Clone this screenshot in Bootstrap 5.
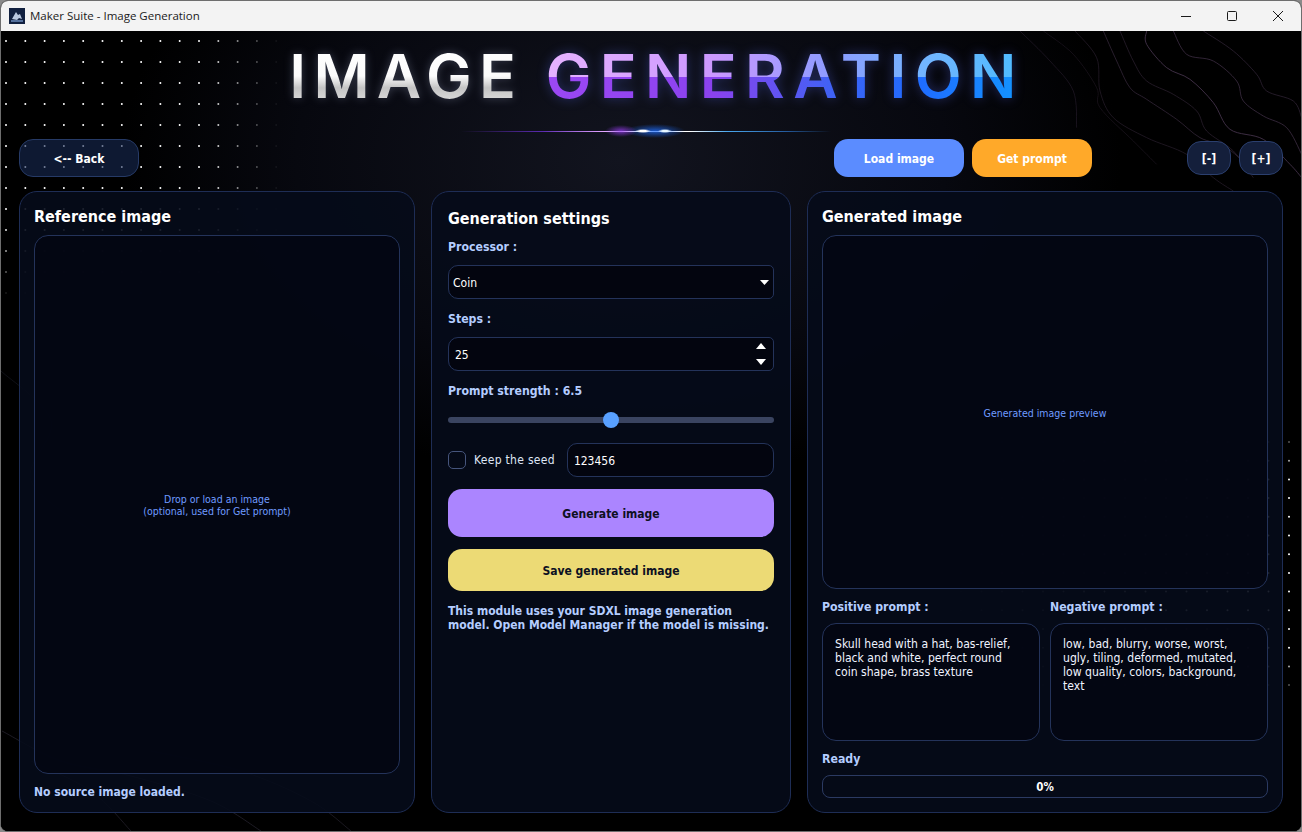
<!DOCTYPE html>
<html lang="en">
  <head>
    <meta charset="UTF-8" />
    <title>Maker Suite - Image Generation</title>
    <link href="https://cdn.jsdelivr.net/npm/bootstrap@5.3.0/dist/css/bootstrap.min.css" rel="stylesheet" />
    <style>
      html, body {
        height: 100%;
        margin: 0;
        background: #8a8a8a;
        overflow: hidden;
      }
      body {
        font-family: "DejaVu Sans", sans-serif;
        font-stretch: condensed;
        font-size: 12px;
      }
      .btn, .form-control, .form-select {
        font-family: "DejaVu Sans", sans-serif;
        font-stretch: condensed;
      }
      .app-window {
        width: 1302px;
        height: 832px;
        border: 1px solid #6e6e6e;
        border-radius: 8px;
        overflow: hidden;
        background: #000;
      }
      .win-titlebar {
        height: 30px;
        background: #f3f3f3;
        padding-left: 8px;
        font-family: "Open Sans", sans-serif;
        font-stretch: normal;
        font-size: 11.5px;
        color: #1a1a1a;
      }
      .win-name { margin-left: 5px; }
      .win-btn {
        width: 46px;
        height: 30px;
      }
      .app-body {
        height: 800px;
        background: radial-gradient(ellipse 500px 320px at 620px 130px, #12141f 0%, #07080f 65%, #000 100%), #000;
      }
      .bg-art {
        position: absolute;
        inset: 0;
        width: 100%;
        height: 100%;
      }
      .app-content {
        position: relative;
        height: 100%;
        padding: 0 18px 18px 18px;
      }
      .app-title {
        height: 108px;
        margin: 0;
        padding: 14px 0 0 12px;
        text-align: center;
        white-space: nowrap;
        font-family: Inter, "Liberation Sans", sans-serif;
        font-stretch: normal;
        font-size: 61px;
        line-height: 62px;
        font-weight: 600;
        letter-spacing: 7.2px;
        color: transparent;
      }
      .title-silver {
        background: linear-gradient(180deg, #fff 0%, #fbfbfb 50%, #c4c4c4 66%, #eee 100%);
        -webkit-background-clip: text;
        background-clip: text;
        filter: drop-shadow(0 0 5px rgba(200, 210, 255, 0.25));
      }
      .title-color {
        letter-spacing: 8.4px;
        background:
          linear-gradient(90deg, #e6b2ff 0%, #cb98ff 35%, #8c9cff 60%, #74b4ff 78%, #4cbcff 100%) top / 100% 52% no-repeat,
          linear-gradient(90deg, #9c48f4 0%, #8a42ee 35%, #3f62f5 60%, #1f6cff 78%, #1296ff 100%) bottom / 100% 48% no-repeat;
        -webkit-background-clip: text;
        background-clip: text;
        filter: drop-shadow(0 0 6px rgba(90, 110, 255, 0.35));
      }
      .title-flare {
        position: absolute;
        left: 460px;
        top: 100px;
        width: 370px;
        height: 1px;
        background: linear-gradient(90deg, transparent 0%, #5a2ab0 22%, #e0a0ff 38%, #fff 47%, #fff 62%, #4aa8f0 72%, #245a9c 88%, transparent 100%);
      }
      .title-flare::after {
        content: "";
        position: absolute;
        left: 130px;
        top: -7px;
        width: 100px;
        height: 15px;
        background:
          radial-gradient(ellipse 8px 2px at 52px 7px, #fff 40%, transparent 100%),
          radial-gradient(ellipse 7px 2px at 74px 7px, #e6f6ff 40%, transparent 100%),
          radial-gradient(ellipse 16px 6px at 30px 7px, rgba(150, 60, 240, 0.75), transparent 100%),
          radial-gradient(ellipse 30px 7px at 64px 7px, rgba(30, 110, 255, 0.75), transparent 100%);
      }
      .top-row {
        height: 38px;
        margin-bottom: 14px;
      }
      .btn.top-btn {
        height: 38px;
        padding: 1px 0 0 0;
        border-radius: 14px;
        font-size: 12px;
        font-weight: 700;
        color: #fff;
        border: 1px solid transparent;
      }
      .btn.back-btn {
        width: 120px;
        background: rgba(24, 42, 84, 0.6);
        border-color: #263a66;
      }
      .btn.load-btn {
        width: 130px;
        background: #5b8cff;
        margin-right: 8px;
      }
      .btn.prompt-btn {
        width: 120px;
        background: #ffa929;
        margin-right: 87px;
      }
      .btn.zoom-btn {
        width: 44px;
        height: 34px;
        background: #141f3b;
        border-color: #2b3f6e;
        margin-left: 8px;
      }
      .panels {
        height: 622px;
        gap: 16px;
      }
      .glass-panel {
        background: rgba(6, 11, 26, 0.9);
        border: 1px solid #1e2d55;
        border-radius: 18px;
        height: 100%;
      }
      .panel-left { width: 396px; padding: 15px 14px 0 14px; }
      .panel-mid { width: 360px; padding: 17px 16px 0 16px; }
      .panel-right { width: 476px; padding: 15px 14px 0 14px; }
      .panel-heading {
        color: #fff;
        font-size: 16px;
        line-height: 20px;
        font-weight: 700;
        margin: 0 0 8px 0;
      }
      .panel-mid .panel-heading { margin-bottom: 10px; }
      .drop-box {
        background: rgba(3, 6, 18, 0.88);
        border: 1px solid #24335a;
        border-radius: 14px;
        color: #6f9bff;
        font-size: 10.5px;
        line-height: 12px;
        text-align: center;
      }
      .drop-src { height: 539px; }
      .drop-gen { height: 354px; padding-top: 2px; }
      .field-label {
        color: #b4cdff;
        font-size: 12.2px;
        line-height: 16px;
        font-weight: 700;
      }
      .field-label.status-text {
        margin-top: 10px;
        font-size: 12px;
      }
      .form-control.dark-input, .form-select.dark-input {
        background-color: #03050f;
        border: 1px solid #24335a;
        border-radius: 10px;
        color: #fff;
        font-size: 12px;
        height: 34px;
        min-height: 0;
        padding: 1px 6px 0 6px;
        box-shadow: none;
      }
      .form-select.dark-input {
        padding: 1px 4px 0 4px;
        background-image: url("data:image/svg+xml,%3Csvg xmlns='http://www.w3.org/2000/svg' width='9' height='5'%3E%3Cpath fill='%23fff' d='M0 0h9L4.500 5z'/%3E%3C/svg%3E");
        background-size: 9px 5px;
        background-position: right 4px center;
      }
      .form-select.dark-input, .spin-wrap .form-control.dark-input {
        border-top-right-radius: 5px;
        border-bottom-right-radius: 5px;
      }
      .spin-wrap {
        position: relative;
      }
      .spin-up, .spin-down {
        position: absolute;
        right: 8px;
        width: 10px;
        height: 6px;
      }
      .spin-up { top: 6px; }
      .spin-down { bottom: 6px; }
      .mid-label { margin: 0 0 10px 0; }
      .mid-gap { margin-bottom: 12px; }
      .form-range.strength {
        height: 16px;
        display: block;
        margin: 13px 0 15px 0;
      }
      .form-range.strength::-webkit-slider-runnable-track {
        height: 6px;
        border-radius: 3px;
        background: #3a4460;
      }
      .form-range.strength::-webkit-slider-thumb {
        width: 16px;
        height: 16px;
        margin-top: -5px;
        border-radius: 50%;
        background: #58a0ff;
        box-shadow: none;
      }
      .seed-row {
        height: 34px;
        margin-bottom: 12px;
      }
      .form-check-input.seed-check {
        width: 18px;
        height: 18px;
        margin: 0 8px 0 0;
        background-color: transparent;
        border: 1px solid #46557c;
        border-radius: 5px;
      }
      .seed-label {
        color: #dfe6f5;
        letter-spacing: 0.3px;
        margin-right: 12px;
        white-space: nowrap;
      }
      .btn.action-btn {
        width: 100%;
        padding: 1px 0 0 0;
        border: 1px solid transparent;
        border-radius: 14px;
        font-size: 12px;
        font-weight: 700;
        color: #0d1022;
      }
      .btn.gen-btn { height: 48px; background: #ab85ff; margin-bottom: 12px; }
      .btn.save-btn { height: 42px; background: #ecda75; }
      .note-text {
        color: #b4cdff;
        font-weight: 700;
        font-size: 12px;
        line-height: 14px;
        margin: 13px 0 0 0;
        white-space: nowrap;
      }
      .prompt-col { width: 218px; }
      .prompt-row { gap: 10px; margin-top: 10px; }
      .form-control.prompt-box {
        height: 118px;
        margin-top: 8px;
        padding: 13px 12px 6px 12px;
        background: rgba(3, 6, 18, 0.88);
        border: 1px solid #24335a;
        border-radius: 14px;
        color: #f0f3ff;
        font-size: 12.1px;
        line-height: 14px;
        resize: none;
        overflow: hidden;
        box-shadow: none;
      }
      .ready-label { margin-top: 10px; }
      .progress.job-progress {
        height: 23px;
        margin-top: 8px;
        position: relative;
        background: transparent;
        border: 1px solid #2b3a62;
        border-radius: 8px;
      }
      .progress-text {
        position: absolute;
        inset: 0;
        text-align: center;
        color: #fff;
        font-size: 11.5px;
        line-height: 23px;
        font-weight: 700;
      }
    </style>
  </head>
  <body>
    <div class="app-window d-flex flex-column">
      <div class="win-titlebar d-flex align-items-center flex-shrink-0">
        <svg width="16" height="16" viewBox="0 0 16 16" class="flex-shrink-0">
          <rect width="16" height="16" fill="#11203f" />
          <path d="M3 11 7 4l2 3 2-1 2 5-3-1-2 2z" fill="#b9c8df" />
          <rect x="2" y="12" width="12" height="2" fill="#54709c" />
        </svg>
        <span class="win-name">Maker Suite - Image Generation</span>
        <div class="ms-auto d-flex">
          <div class="win-btn d-flex align-items-center justify-content-center">
            <svg width="10" height="10"><path d="M0 5.500h10" stroke="#1a1a1a" /></svg>
          </div>
          <div class="win-btn d-flex align-items-center justify-content-center">
            <svg width="10" height="10"><rect x=".5" y=".5" width="9" height="9" rx="1" fill="none" stroke="#1a1a1a" /></svg>
          </div>
          <div class="win-btn d-flex align-items-center justify-content-center">
            <svg width="10" height="10"><path d="M0 0l10 10M10 0 0 10" stroke="#1a1a1a" /></svg>
          </div>
        </div>
      </div>
      <div class="app-body position-relative flex-grow-1">
        <svg class="bg-art" id="bgArt" viewBox="0 0 1300 800"></svg>
        <div class="app-content">
          <h1 class="app-title"><span class="title-silver">IMAGE</span> <span class="title-color">GENERATION</span></h1>
          <div class="title-flare"></div>
          <div class="top-row d-flex align-items-center">
            <button class="btn top-btn back-btn">&lt;-- Back</button>
            <div class="ms-auto d-flex align-items-center">
              <button class="btn top-btn load-btn">Load image</button>
              <button class="btn top-btn prompt-btn">Get prompt</button>
              <button class="btn top-btn zoom-btn">[-]</button>
              <button class="btn top-btn zoom-btn">[+]</button>
            </div>
          </div>
          <div class="panels d-flex">
            <div class="glass-panel panel-left">
              <h2 class="panel-heading">Reference image</h2>
              <div class="drop-box drop-src d-flex align-items-center justify-content-center">
                <div>Drop or load an image<br />(optional, used for Get prompt)</div>
              </div>
              <div class="field-label status-text">No source image loaded.</div>
            </div>
            <div class="glass-panel panel-mid">
              <h2 class="panel-heading">Generation settings</h2>
              <div class="field-label mid-label">Processor :</div>
              <select class="form-select dark-input mid-gap"><option>Coin</option></select>
              <div class="field-label mid-label">Steps :</div>
              <div class="spin-wrap mid-gap">
                <input class="form-control dark-input" value="25" />
                <svg class="spin-up" viewBox="0 0 10 6"><path d="M0 6h10L5 0z" fill="#fff" /></svg>
                <svg class="spin-down" viewBox="0 0 10 6"><path d="M0 0h10L5 6z" fill="#fff" /></svg>
              </div>
              <div class="field-label">Prompt strength : 6.5</div>
              <input type="range" class="form-range strength" min="1" max="12" step="0.5" value="6.5" />
              <div class="seed-row d-flex align-items-center">
                <input type="checkbox" class="form-check-input seed-check" />
                <span class="seed-label">Keep the seed</span>
                <input class="form-control dark-input flex-grow-1 w-auto" value="123456" />
              </div>
              <button class="btn action-btn gen-btn">Generate image</button>
              <button class="btn action-btn save-btn">Save generated image</button>
              <p class="note-text">This module uses your SDXL image generation<br />model. Open Model Manager if the model is missing.</p>
            </div>
            <div class="glass-panel panel-right">
              <h2 class="panel-heading">Generated image</h2>
              <div class="drop-box drop-gen d-flex align-items-center justify-content-center">Generated image preview</div>
              <div class="d-flex prompt-row">
                <div class="prompt-col">
                  <div class="field-label">Positive prompt :</div>
                  <textarea class="form-control prompt-box">Skull head with a hat, bas-relief, black and white, perfect round coin shape, brass texture</textarea>
                </div>
                <div class="prompt-col">
                  <div class="field-label">Negative prompt :</div>
                  <textarea class="form-control prompt-box">low, bad, blurry, worse, worst, ugly, tiling, deformed, mutated, low quality, colors, background, text</textarea>
                </div>
              </div>
              <div class="field-label ready-label">Ready</div>
              <div class="progress job-progress">
                <div class="progress-bar" style="width: 0%"></div>
                <div class="progress-text">0%</div>
              </div>
            </div>
          </div>
        </div>
      </div>
    </div>
    <script>
      // background dots and contour lines
      const art = document.getElementById("bgArt");
      let out = "";
      for (let i = 0; i < 15; i++) {
        for (let j = 0; j < 13; j++) {
          const x = 5 + i * 19.3;
          const y = 10 + j * 21;
          const fade = Math.min(1, Math.max(0, (280 - x) / 80)) * Math.min(1, Math.max(0, (270 - y) / 80));
          if (fade > 0.03) out += `<circle cx="${x}" cy="${y}" r="1" fill="#fff" opacity="${fade.toFixed(2)}"/>`;
        }
      }
      for (let i = 0; i < 17; i++) {
        for (let j = 0; j < 14; j++) {
          const x = 1288 - i * 20.5;
          const y = 411 + j * 18.7;
          const fade = (1 - i / 17) * Math.min(1, (j + 1) / 3, (14 - j) / 3);
          if (fade > 0.05) out += `<circle cx="${x}" cy="${y}" r="1" fill="#fff" opacity="${fade.toFixed(2)}"/>`;
        }
      }
      // smooth line through points measured from the picture
      function curve(points, color, opacity) {
        let d = `M${points[0][0]} ${points[0][1]}`;
        for (let i = 0; i < points.length - 1; i++) {
          const p0 = points[Math.max(i - 1, 0)], p1 = points[i], p2 = points[i + 1], p3 = points[Math.min(i + 2, points.length - 1)];
          d += `C${p1[0] + (p2[0] - p0[0]) / 6} ${p1[1] + (p2[1] - p0[1]) / 6} ${p2[0] - (p3[0] - p1[0]) / 6} ${p2[1] - (p3[1] - p1[1]) / 6} ${p2[0]} ${p2[1]}`;
        }
        return `<path d="${d}" fill="none" stroke="${color}" stroke-opacity="${opacity}"/>`;
      }
      const topRight = [
        [[440, 0], [440, 40], [500, 110], [570, 145], [640, 215], [690, 295], [790, 325], [870, 400], [905, 440], .75],
        [[360, 0], [400, 90], [440, 150], [520, 190], [590, 240], [620, 300], [700, 360], [760, 440], .4],
        [[520, 0], [560, 70], [640, 90], [710, 150], [730, 210], [790, 255], [860, 290], [905, 370], .6],
        [[610, 0], [700, 60], [770, 130], [800, 180], [880, 210], [905, 260], .45],
        [[225, 0], [290, 80], [300, 180], [340, 260], [440, 320], [560, 370], [640, 440], [700, 480], .35],
        [[310, 0], [350, 90], [390, 170], [440, 205], [530, 265], [600, 320], [680, 350], [770, 430], .5],
        [[60, 0], [150, 90], [220, 180], [230, 290], .3],
        [[130, 0], [220, 70], [290, 170], [300, 230], [400, 330], [470, 400], .25]
      ];
      topRight.forEach((line) => {
        const opacity = line[line.length - 1];
        const pts = line.slice(0, -1).map((p) => [p[0] / 3 + 999, p[1] / 3]);
        out += curve(pts, "#503c58", opacity);
      });
      out += curve([[1, 700], [60, 730], [130, 745], [210, 770], [260, 800]], "#3a3648", 0.5);
      out += curve([[30, 730], [90, 760], [130, 800]], "#33303f", 0.5);
      out += curve([[150, 720], [240, 740], [310, 770], [350, 800]], "#3a3648", 0.45);
      out += curve([[0, 340], [50, 390], [30, 450], [90, 500]], "#2a2d3e", 0.35);
      art.innerHTML = out;
    </script>
    <script src="https://cdn.jsdelivr.net/npm/bootstrap@5.3.0/dist/js/bootstrap.bundle.min.js"></script>
  </body>
</html>
